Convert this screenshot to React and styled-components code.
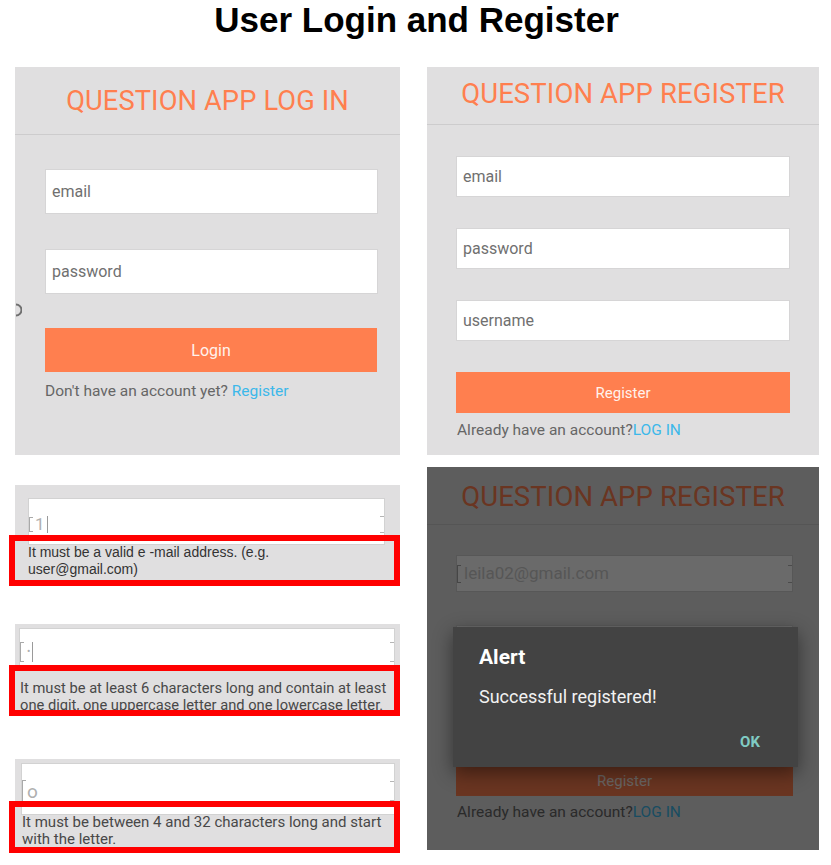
import React from "react";
import styled, { createGlobalStyle } from "styled-components";

const GlobalStyle = createGlobalStyle`
  html, body { margin: 0; padding: 0; background: #ffffff; }
  * { box-sizing: border-box; }
`;

const ORANGE = "#ff7f4f";
const PANEL_BG = "#e0dfe0";
const LINK = "#3cb8ea";

const Page = styled.div`
  width: 831px;
  font-family: Roboto, "Noto Sans", sans-serif;
`;

const Heading = styled.h1`
  margin: 0;
  height: 67px;
  padding: 0 0 0 2px;
  font: bold 35px/40px "Liberation Sans", Arial, sans-serif;
  text-align: center;
  color: #000;
`;

const Grid = styled.div`
  display: grid;
  grid-template-columns: 385px 392px;
  column-gap: 27px;
  row-gap: 12px;
  padding: 0 12px 0 15px;
  align-items: start;
`;

const Panel = styled.div`
  position: relative;
  height: ${(p) => p.$h}px;
  background: ${PANEL_BG};
  display: flex;
  flex-direction: column;
  overflow: hidden;
`;

const Header = styled.div`
  height: ${(p) => p.$h}px;
  border-bottom: 1px solid #cdcccd;
  display: flex;
  align-items: center;
  justify-content: center;
  padding-top: ${(p) => p.$pt || 0}px;
  padding-bottom: ${(p) => p.$pb || 0}px;
`;

const Title = styled.div`
  font-size: ${(p) => p.$size}px;
  color: ${ORANGE};
  font-weight: 400;
  letter-spacing: 0.1px;
`;

const Form = styled.div`
  display: flex;
  flex-direction: column;
  gap: ${(p) => p.$gap}px;
  padding: ${(p) => p.$pt}px ${(p) => p.$pr}px 0 ${(p) => p.$pl}px;
`;

const TextInput = styled.input`
  display: block;
  width: 100%;
  height: ${(p) => p.$h}px;
  border: 1px solid #d6d5d6;
  background: #fff;
  padding: 0 6px;
  font-family: Roboto, sans-serif;
  font-size: 16px;
  color: #333;
  outline: none;
  &::placeholder { color: #707070; opacity: 1; }
`;

const Button = styled.button`
  display: block;
  width: 100%;
  height: ${(p) => p.$h}px;
  border: none;
  background: ${ORANGE};
  color: #fff2ec;
  font-family: Roboto, sans-serif;
  font-size: ${(p) => p.$fs}px;
  font-weight: 400;
  cursor: pointer;
`;

const Hint = styled.div`
  margin-top: ${(p) => p.$mt}px;
  padding-left: ${(p) => p.$pl}px;
  font-size: ${(p) => p.$fs}px;
  line-height: 18px;
  color: #666;
  white-space: nowrap;
`;

const Link = styled.span`
  color: ${LINK};
`;

const Spinner = styled.svg`
  position: absolute;
  left: 0;
  top: 236px;
`;

/* validation blocks */
const Column = styled.div`
  display: flex;
  flex-direction: column;
  margin-top: ${(p) => p.$mt || 0}px;
`;

const Block = styled.div`
  background: ${PANEL_BG};
  padding-top: ${(p) => p.$pt}px;
  margin-top: ${(p) => p.$mt || 0}px;
`;

const Field = styled.div`
  height: ${(p) => p.$h}px;
  margin: 0 ${(p) => p.$r || 0}px 0 ${(p) => p.$l || 0}px;
  background: ${(p) => p.$bg || "#fff"};
  border: 1px solid #d2d2d2;
  display: flex;
  align-items: center;
  padding-top: ${(p) => p.$shift || 0}px;
`;

const BracketL = styled.span`
  width: 4px;
  height: ${(p) => p.$h || 15}px;
  border: 1px solid #a9a9a9;
  border-right: none;
  flex: none;
`;

const BracketR = styled.span`
  width: 4px;
  height: ${(p) => p.$h || 17}px;
  border-top: 1px solid #b5b5b5;
  border-bottom: 1px solid #b5b5b5;
  margin-left: auto;
  flex: none;
`;

const Value = styled.span`
  font-size: ${(p) => p.$fs || 17}px;
  color: ${(p) => p.$color || "#b0b0b0"};
  margin-left: ${(p) => p.$ml || 2}px;
  line-height: 1;
`;

const Caret = styled.span`
  width: 1px;
  height: ${(p) => p.$h || 18}px;
  background: #9a9a9a;
  margin-left: 2px;
  flex: none;
`;

const Message = styled.div`
  position: relative;
  height: ${(p) => p.$h}px;
  margin: ${(p) => -p.$overlap}px 0 0 -6px;
  border: 6px solid #ff0000;
  padding: ${(p) => p.$pt}px ${(p) => p.$pr || 0}px 0 ${(p) => p.$pl}px;
  overflow: hidden;
  font-family: ${(p) => (p.$arial ? '"Liberation Sans", Arial, sans-serif' : "Roboto, sans-serif")};
  font-size: ${(p) => p.$fs}px;
  line-height: ${(p) => p.$lh}px;
  color: ${(p) => (p.$arial ? "#333" : "#484848")};
`;

/* dimmed register with dialog */
const Dim = styled.div`
  position: absolute;
  inset: 0;
  background: rgba(0, 0, 0, 0.585);
`;

const Dialog = styled.div`
  position: absolute;
  top: 160px;
  left: 26px;
  right: 21px;
  height: 140px;
  background: #434343;
  box-shadow: 0 6px 18px rgba(0, 0, 0, 0.45);
  padding: 18px 38px 0 26px;
  color: #fff;
`;

const DialogTitle = styled.div`
  font-size: 21px;
  font-weight: 700;
  line-height: 24px;
`;

const DialogText = styled.div`
  margin-top: 17px;
  font-size: 18px;
  line-height: 22px;
  color: #f2f2f2;
`;

const DialogActions = styled.div`
  margin-top: 25px;
  display: flex;
  justify-content: flex-end;
`;

const OkButton = styled.span`
  font-size: 15px;
  font-weight: 700;
  line-height: 18px;
  color: #80cbc4;
`;

function LoginPanel() {
  return (
    <Panel $h={388}>
      <Header $h={68}>
        <Title $size={27.3}>QUESTION APP LOG IN</Title>
      </Header>
      <Form $gap={35} $pt={34} $pl={30} $pr={22}>
        <TextInput $h={45} placeholder="email" readOnly />
        <TextInput $h={45} placeholder="password" readOnly />
      </Form>
      <Form $gap={0} $pt={34} $pl={30} $pr={23}>
        <Button $h={44} $fs={16}>Login</Button>
      </Form>
      <Hint $mt={10} $pl={30} $fs={15.5}>
        Don't have an account yet? <Link>Register</Link>
      </Hint>
      <Spinner width="7" height="14" viewBox="0 0 7 14">
        <path d="M1 1.5 A5.5 5.5 0 0 1 1 12.5" fill="none" stroke="#6f6f6f" strokeWidth="2" />
      </Spinner>
    </Panel>
  );
}

function RegisterPanel({ dense }) {
  return (
    <Form $gap={0} $pt={0} $pl={0} $pr={0} as="div">
      <Header $h={58} $pt={dense ? 2 : 0} $pb={dense ? 0 : 5}>
        <Title $size={27.5}>QUESTION APP REGISTER</Title>
      </Header>
      <Form $gap={dense ? 33 : 31} $pt={dense ? 30 : 31} $pl={29} $pr={dense ? 26 : 29}>
        {dense ? (
          <Field $h={37} $bg="#fff">
            <BracketL $h={18} />
            <Value $fs={17} $color="#cfcfcf" $ml={3}>leila02@gmail.com</Value>
            <BracketR $h={18} />
          </Field>
        ) : (
          <TextInput $h={41} placeholder="email" readOnly />
        )}
        {dense ? <TextInput $h={37} readOnly /> : <TextInput $h={41} placeholder="password" readOnly />}
        {dense ? <TextInput $h={37} readOnly /> : <TextInput $h={41} placeholder="username" readOnly />}
        <Button $h={dense ? 31 : 41} $fs={15}>Register</Button>
      </Form>
      <Hint $mt={dense ? 7 : 8} $pl={30} $fs={15.5}>
        Already have an account?<Link>LOG IN</Link>
      </Hint>
    </Form>
  );
}

function ValidationBlocks() {
  return (
    <Column $mt={18}>
      <Block $pt={13}>
        <Field $h={47} $l={13} $r={15} $shift={6}>
          <BracketL $h={15} />
          <Value $fs={17}>1</Value>
          <Caret $h={17} />
          <BracketR $h={17} />
        </Field>
        <Message $h={51} $overlap={10} $pt={3} $pl={13} $pr={100} $fs={14} $lh={17} $arial>
          It must be a valid e -mail address. (e.g. user@gmail.com)
        </Message>
      </Block>
      <Block $pt={4} $mt={38}>
        <Field $h={42} $l={4} $r={5} $shift={6}>
          <BracketL $h={20} />
          <Value $fs={10} $ml={3}>•</Value>
          <Caret $h={20} />
          <BracketR $h={20} />
        </Field>
        <Message $h={51} $overlap={5} $pt={9} $pl={5} $pr={0} $fs={14.7} $lh={16.5}>
          It must be at least 6 characters long and contain at least one digit, one uppercase letter and one lowercase letter.
        </Message>
      </Block>
      <Block $pt={4} $mt={43}>
        <Field $h={52} $l={6} $r={5} $shift={4}>
          <BracketL $h={22} />
          <Value $fs={19} $ml={1}>o</Value>
          <BracketR $h={20} />
        </Field>
        <Message $h={52} $overlap={14} $pt={7} $pl={7} $fs={15} $lh={17}>
          It must be between 4 and 32 characters long and start with the letter.
        </Message>
      </Block>
    </Column>
  );
}

export default function App() {
  return (
    <Page>
      <GlobalStyle />
      <Heading>User Login and Register</Heading>
      <Grid>
        <LoginPanel />
        <Panel $h={388}>
          <RegisterPanel />
        </Panel>
        <ValidationBlocks />
        <Panel $h={383}>
          <RegisterPanel dense />
          <Dim />
          <Dialog>
            <DialogTitle>Alert</DialogTitle>
            <DialogText>Successful registered!</DialogText>
            <DialogActions>
              <OkButton>OK</OkButton>
            </DialogActions>
          </Dialog>
        </Panel>
      </Grid>
    </Page>
  );
}
